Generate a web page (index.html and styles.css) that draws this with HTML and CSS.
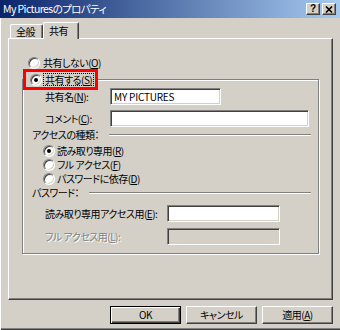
FILE: index.html
```html
<!DOCTYPE html>
<html>
<head>
	<title>My Picturesのプロパティ</title>
	<link rel="stylesheet" href="styles.css">
</head>
<body>
<div class="window">
	<!-- title bar -->
	<div class="titlebar">
		<span class="title">My Picturesのプロパティ</span>
		<span class="capbtn help">?</span>
		<span class="capbtn close">
			<svg width="8" height="7" viewBox="0 0 8 7"><path d="M1 0.5L7 6.5M7 0.5L1 6.5" stroke="#000" stroke-width="1.6"/></svg>
		</span>
	</div>

	<div class="main">
		<!-- tabs -->
		<div class="tabs">
			<div class="tab">全般</div>
			<div class="tab active">共有</div>
		</div>

		<div class="panel">
			<div class="radio-row first">
				<span class="radio"></span>
				<span>共有しない(<u>O</u>)</span>
			</div>

			<div class="group">
				<div class="group-head">
					<span class="radio checked"></span>
					<span class="focus">共有する(<u>S</u>)</span>
				</div>

				<div class="field share-name">
					<span class="label">共有名(<u>N</u>):</span>
					<div class="input name-input">MY PICTURES</div>
				</div>
				<div class="field comment">
					<span class="label">コメント(<u>C</u>):</span>
					<div class="input comment-input"></div>
				</div>

				<div class="section access">
					<span>アクセスの種類：</span>
					<span class="line"></span>
				</div>
				<div class="radio-row opt">
					<span class="radio checked"></span>
					<span>読み取り専用(<u>R</u>)</span>
				</div>
				<div class="radio-row opt">
					<span class="radio"></span>
					<span>フル アクセス(<u>F</u>)</span>
				</div>
				<div class="radio-row opt">
					<span class="radio"></span>
					<span>パスワードに依存(<u>D</u>)</span>
				</div>

				<div class="section pass">
					<span>パスワード：</span>
					<span class="line"></span>
				</div>
				<div class="field pw-read">
					<span class="label wide">読み取り専用アクセス用(<u>E</u>):</span>
					<div class="input pw-input"></div>
				</div>
				<div class="field pw-full disabled">
					<span class="label wide">フル アクセス用(<u>L</u>):</span>
					<div class="input pw-input off"></div>
				</div>
			</div>
		</div>

		<!-- dialog buttons -->
		<div class="buttons">
			<div class="btn default">OK</div>
			<div class="btn">キャンセル</div>
			<div class="btn">適用(<u>A</u>)</div>
		</div>
	</div>
</div>
</body>
</html>
```

FILE: styles.css
```css
* {
	box-sizing: border-box;
}

body {
	margin: 0;
	background-color: #d4d0c8;
	font-family: "Noto Sans CJK JP", sans-serif;
	font-size: 10px;
	line-height: 12px;
	letter-spacing: -0.5px;
	color: black;
	font-feature-settings: "palt";
}

.window {
	width: 340px;
	height: 330px;
	display: flex;
	flex-direction: column;
	overflow: hidden;
	box-shadow: inset 0 -1px #404040, inset 0 -2px #808080;
}

/* title bar */
.titlebar {
	height: 18px;
	display: flex;
	align-items: center;
	padding: 0 4px 0 3px;
	background: linear-gradient(to right, #0a246a, #a6caf0);
	color: white;
	font-size: 10.5px;
	letter-spacing: -0.6px;
}

.title {
	flex: 1;
}

.capbtn {
	width: 14px;
	height: 12px;
	display: flex;
	align-items: center;
	justify-content: center;
	background-color: #d4d0c8;
	border: 1px solid;
	border-color: #fff #404040 #404040 #fff;
	box-shadow: inset -1px -1px #808080;
	color: black;
	font-family: "Liberation Sans", sans-serif;
	font-weight: bold;
	font-size: 10px;
	letter-spacing: 0;
}

.capbtn.close {
	margin-left: 2px;
}

/* main area */
.main {
	flex: 1;
	display: flex;
	flex-direction: column;
	padding: 4px 7px 0 8px;
	box-shadow: inset 1px 0 #fff;
}

.tabs {
	display: flex;
	align-items: flex-end;
	height: 16px;
	padding-left: 2px;
}

.tab {
	width: 33px;
	height: 14px;
	padding: 1px 0 0 5px;
	border-top: 1px solid #fff;
	border-left: 1px solid #fff;
	border-right: 1px solid #404040;
	border-radius: 2px 2px 0 0;
	box-shadow: inset -1px 0 #808080;
}

.tab.active {
	position: relative;
	width: 36px;
	height: 17px;
	margin-bottom: -1px;
	padding: 2px 0 0 5px;
	background-color: #d4d0c8;
}

.panel {
	width: 325px;
	height: 262px;
	padding: 17px 0 0 19px;
	border: 1px solid;
	border-color: #fff #404040 #404040 #fff;
	box-shadow: inset -1px -1px #808080;
}

.radio-row {
	display: flex;
	align-items: center;
	gap: 2px;
	height: 14px;
}

.radio {
	width: 12px;
	height: 12px;
	border-radius: 50%;
	background-color: white;
	border: 1px solid;
	border-color: #808080 #fff #fff #808080;
	box-shadow: inset 1px 1px #404040, inset -1px -1px #d4d0c8;
	display: flex;
	align-items: center;
	justify-content: center;
}

.radio.checked::after {
	content: "";
	width: 4px;
	height: 4px;
	border-radius: 50%;
	background-color: black;
}

.radio-row.first .radio {
	margin-right: 1px;
}

/* group box */
.group {
	width: 297px;
	margin: 9px 0 0 -6px;
	padding-bottom: 8px;
	border: 1px solid #808080;
	box-shadow: inset 1px 1px #fff, 1px 1px #fff;
}

.group-head {
	width: fit-content;
	height: 21px;
	margin-top: -11px;
	display: flex;
	align-items: center;
	gap: 1px;
	padding-left: 4px;
	padding-right: 1px;
	background-color: #d4d0c8;
	border: 3px solid #f00;
}

.focus {
	padding: 0 1px;
	border: 1px dotted black;
	line-height: 11px;
}

.field {
	display: flex;
	align-items: center;
	padding-left: 22px;
}

.label {
	width: 65px;
}

.label.wide {
	width: 122px;
}

.input {
	height: 17px;
	padding: 2px 3px;
	background-color: white;
	border: 1px solid;
	border-color: #808080 #fff #fff #808080;
	box-shadow: inset 1px 1px #404040, inset -1px -1px #d4d0c8;
	font-size: 10px;
	line-height: 12px;
	letter-spacing: -0.2px;
}

.share-name {
	margin-top: -2px;
}

.name-input {
	width: 111px;
}

.comment {
	margin-top: 5px;
}

.comment-input {
	width: 199px;
}

.section {
	display: flex;
	align-items: center;
	gap: 10px;
	height: 12px;
	padding: 0 7px 0 9px;
}

.section .line {
	flex: 1;
	height: 2px;
	border-top: 1px solid #808080;
	border-bottom: 1px solid #fff;
}

.access {
	margin-top: 2px;
}

.radio-row.opt {
	padding-left: 20px;
	gap: 2px;
}

.access + .radio-row {
	margin-top: 3px;
}

.pass {
	margin-top: 1px;
}

.pw-read {
	margin-top: 6px;
}

.pw-full {
	margin-top: 6px;
}

.pw-input {
	width: 113px;
}

.pw-input.off {
	background-color: #d4d0c8;
}

.disabled .label {
	color: #808080;
	text-shadow: 1px 1px #fff;
}

/* bottom buttons */
.buttons {
	display: flex;
	justify-content: flex-end;
	gap: 5px;
	margin-top: 6px;
}

.btn {
	width: 71px;
	height: 18px;
	display: flex;
	align-items: center;
	justify-content: center;
	border: 1px solid;
	border-color: #fff #404040 #404040 #fff;
	box-shadow: inset -1px -1px #808080;
}

.btn.default {
	border-color: black;
	box-shadow: inset 1px 1px #fff, inset -1px -1px #404040, inset -2px -2px #808080;
}
```
